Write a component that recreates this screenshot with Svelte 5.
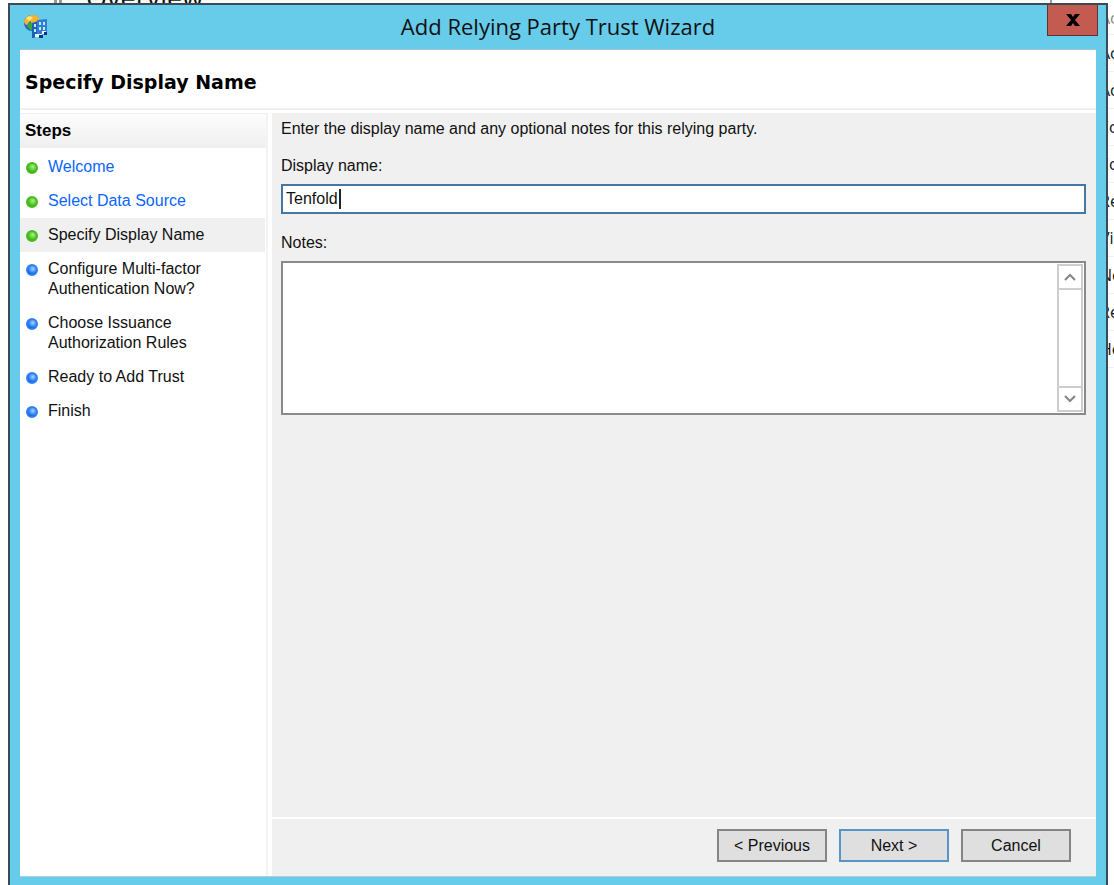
<script lang="ts">
  type Step = { label: string; done: boolean; href?: string; current?: boolean };

  const steps: Step[] = [
    { label: 'Welcome', done: true, href: '#welcome' },
    { label: 'Select Data Source', done: true, href: '#source' },
    { label: 'Specify Display Name', done: true, current: true },
    { label: 'Configure Multi-factor Authentication Now?', done: false },
    { label: 'Choose Issuance Authorization Rules', done: false },
    { label: 'Ready to Add Trust', done: false },
    { label: 'Finish', done: false },
  ];

  const actions = ['Ac', 'Ac', 'Ac', 'Ec', 'Ec', 'Re', 'Vi', 'Ne', 'Re', 'He'];

  let displayName = $state('Tenfold');
  let notes = $state('');
</script>

<div class="desktop">
  <div class="console">
    <div class="console-main">Overview</div>
    <ul class="console-actions">
      {#each actions as action, i}
        <li class:heading={i === 0}>{action}</li>
      {/each}
    </ul>
  </div>

  <section class="window" aria-labelledby="window-title">
    <header class="titlebar">
      <svg class="app-icon" viewBox="0 0 26 26" width="26" height="26" aria-hidden="true">
        <circle cx="9" cy="9" r="8" fill="#2166c8" />
        <path d="M1 7 Q3 1 9 1 Q15 1 17 6 L15 9 L12 8 L10 11 L7 7 L4 11 Q1 10 1 7Z" fill="#f4b52c" />
        <path d="M3 4 L7 2 L10 4 L6 7Z" fill="#ffe88a" />
        <path d="M6 9 L12 9 L11 17 Q6 16 4 12Z" fill="#38a83b" />
        <path d="M9 9 L15 7 V21 L11 24 H9Z" fill="#1d62b8" />
        <path d="M14 6 L24 5 V20 L14 21Z" fill="#2f7fd2" />
        <path d="M11 10h2v3h-2z M11 15h2v3h-2z M16 8h2v3h-2z M20 8h2v3h-2z M16 13h2v3h-2z M20 13h2v3h-2z" fill="#c4e8fb" />
        <path d="M12 20h7v3h-7z M19 17h4v3h-4z" fill="#eef8ff" />
        <path d="M16 21h4v3h-4z M21 18h3v3h-3z" fill="#0b338e" />
      </svg>
      <h1 id="window-title">Add Relying Party Trust Wizard</h1>
      <button class="close" aria-label="Close">
        <svg viewBox="0 0 14 12" width="14" height="12" aria-hidden="true">
          <path d="M0 0h5l2 3 2-3h5L9 6l5 6H9L7 9l-2 3H0l5-6z" fill="#000" />
        </svg>
      </button>
    </header>

    <div class="client">
      <h2 class="page-title">Specify Display Name</h2>

      <div class="body">
        <nav class="sidebar" aria-labelledby="steps-title">
          <h3 id="steps-title">Steps</h3>
          <ol>
            {#each steps as step}
              <li class:current={step.current}>
                <span class="dot" class:done={step.done}></span>
                {#if step.href}
                  <a href={step.href}>{step.label}</a>
                {:else}
                  <span class="label">{step.label}</span>
                {/if}
              </li>
            {/each}
          </ol>
        </nav>

        <main>
          <form class="fields" id="name-form">
            <p>Enter the display name and any optional notes for this relying party.</p>
            <label for="display-name">Display name:</label>
            <div class="text-field">
              <input id="display-name" type="text" bind:value={displayName} />
              <span class="caret"></span>
            </div>
            <label for="notes">Notes:</label>
            <div class="notes-field">
              <textarea id="notes" bind:value={notes}></textarea>
              <div class="scrollbar">
                <button type="button" aria-label="Scroll up">
                  <svg viewBox="0 0 12 8" width="12" height="8"><path d="M1 7l5-5 5 5" /></svg>
                </button>
                <button type="button" aria-label="Scroll down">
                  <svg viewBox="0 0 12 8" width="12" height="8"><path d="M1 1l5 5 5-5" /></svg>
                </button>
              </div>
            </div>
          </form>
          <footer>
            <button type="button">&lt; Previous</button>
            <button type="button" class="default">Next &gt;</button>
            <button type="button">Cancel</button>
          </footer>
        </main>
      </div>
    </div>
  </section>
</div>

<style>
  :global(body) {
    background: #fff;
  }

  * {
    box-sizing: border-box;
  }

  h1, h2, h3, p, ol, ul {
    margin: 0;
    padding: 0;
    list-style: none;
  }

  button, input, textarea {
    font: inherit;
    color: inherit;
    border-radius: 0;
    margin: 0;
  }

  .desktop {
    position: relative;
    display: flex;
    height: 100vh;
    padding: 3px 6px 0 8px;
    overflow: hidden;
    font-family: "Liberation Sans", Arial, sans-serif;
    font-size: 16px;
    line-height: 20px;
    color: #111;
  }

  /* the management console behind the wizard */
  .console {
    position: absolute;
    inset: 0;
    display: flex;
    justify-content: space-between;
  }

  .console-main {
    flex: 1;
    height: 40px;
    margin: -16px 48px 0 54px;
    padding-left: 24px;
    border: solid #999;
    border-width: 0 2px 0 8px;
    border-left-style: double;
    background: #fafafa;
    font: 27px/28px "Open Sans", sans-serif;
  }

  .console-actions {
    width: 14px;
    overflow: hidden;
    font-family: "Open Sans", sans-serif;
  }

  .console-actions li {
    height: 37px;
    line-height: 36px;
    white-space: nowrap;
    border-bottom: 1px solid #f0f0f0;
  }

  .console-actions .heading {
    height: 35px;
    color: #8a8a8a;
  }

  .window {
    position: relative;
    flex: 1;
    display: flex;
    flex-direction: column;
    padding: 0 10px 8px;
    border: 2px solid #3c4a54;
    border-bottom: 0;
    background: #67cbea;
  }

  .titlebar {
    display: grid;
    grid-template-columns: 50px 1fr 50px;
    height: 44px;
  }

  .app-icon {
    margin: 9px 0 0 3px;
  }

  h1 {
    padding-top: 5px;
    text-align: center;
    font: 22px/32px "Open Sans", sans-serif;
  }

  .close {
    display: grid;
    place-items: center;
    justify-self: end;
    width: 51px;
    height: 31px;
    margin-right: -2px;
    padding: 0;
    border: 1px solid #5b3333;
    border-top: 0;
    background: #c45b51;
  }

  .client {
    flex: 1;
    display: flex;
    flex-direction: column;
    border-top: 1px solid #9fc4d4;
    border-bottom: 1px solid #b3cdd8;
    background: #fff;
  }

  .page-title {
    height: 60px;
    padding-left: 5px;
    border-bottom: 2px solid #f0f0f0;
    font: bold 19px/64px "DejaVu Sans", sans-serif;
    color: #000;
  }

  .body {
    flex: 1;
    display: grid;
    grid-template-columns: 248px 1fr;
    gap: 4px;
    padding-top: 3px;
  }

  .sidebar {
    border-top: 1px solid #f0f0f0;
    border-right: 2px solid #f3f3f3;
  }

  h3 {
    height: 34px;
    margin-bottom: 2px;
    padding-left: 5px;
    background: linear-gradient(#fdfdfd, #efefef);
    font-size: 17px;
    line-height: 34px;
    color: #000;
  }

  .sidebar li {
    display: grid;
    grid-template-columns: 12px 1fr;
    gap: 10px;
    margin-right: 1px;
    padding: 7px 56px 7px 6px;
  }

  .sidebar .current {
    background: #f0f0f0;
  }

  .sidebar a {
    color: #0a66ff;
    text-decoration: none;
  }

  .dot {
    width: 12px;
    height: 12px;
    margin-top: 5px;
    border: 2px solid #2b80f5;
    border-radius: 50%;
    background: radial-gradient(circle at 60% 35%, #a9d2ff, #0a62ee 75%);
  }

  .dot.done {
    border-color: #45bd1c;
    background: radial-gradient(circle at 60% 35%, #b0ee8c, #35b60c 75%);
  }

  main {
    display: flex;
    flex-direction: column;
    background: #f0f0f0;
  }

  .fields {
    flex: 1;
    display: flex;
    flex-direction: column;
    padding: 6px 10px 0 9px;
  }

  .fields p {
    margin-bottom: 17px;
  }

  .fields label {
    margin-bottom: 8px;
  }

  .text-field {
    position: relative;
    display: flex;
    height: 30px;
    margin-bottom: 19px;
  }

  .text-field input {
    flex: 1;
    min-width: 0;
    padding: 0 3px;
    border: 2px solid #4577a3;
    outline: 0;
    background: #fff;
    caret-color: transparent;
  }

  .caret {
    position: absolute;
    top: 5px;
    left: 58px;
    width: 2px;
    height: 20px;
    background: #222;
  }

  .notes-field {
    display: flex;
    height: 154px;
    padding: 1px;
    border: 2px solid #8a8a8a;
    background: #fff;
  }

  .notes-field textarea {
    flex: 1;
    min-width: 0;
    border: 0;
    outline: 0;
    resize: none;
    overflow: hidden;
    background: #fff;
  }

  .scrollbar {
    display: flex;
    flex-direction: column;
    justify-content: space-between;
    width: 26px;
    border: 2px solid #cdcdcd;
  }

  .scrollbar button {
    display: grid;
    place-items: center;
    height: 24px;
    padding: 0;
    border: 0 solid #cdcdcd;
    border-bottom-width: 2px;
    background: #fff;
  }

  .scrollbar button:last-child {
    border-width: 2px 0 0;
  }

  .scrollbar path {
    fill: none;
    stroke: #858585;
    stroke-width: 2;
  }

  footer {
    display: flex;
    justify-content: flex-end;
    gap: 12px;
    padding: 10px 25px 14px;
    border-top: 2px solid #fff;
  }

  footer button {
    width: 110px;
    height: 33px;
    padding: 0;
    border: 2px solid #858585;
    background: #dfdfdf;
  }

  footer .default {
    border-color: #5596c9;
  }
</style>
